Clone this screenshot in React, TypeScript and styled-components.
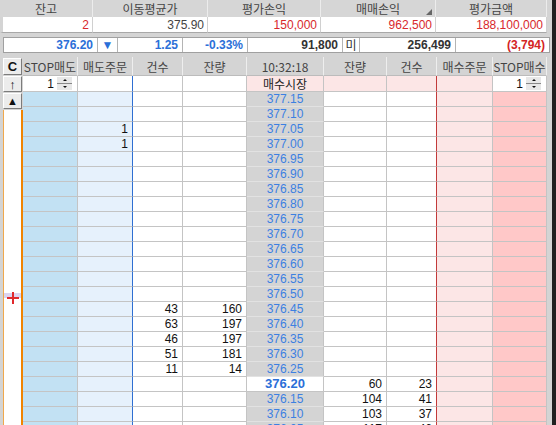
import styled, { createGlobalStyle } from 'styled-components';

const GlobalStyle = createGlobalStyle`
  html, body { margin: 0; padding: 0; }
  body {
    font-family: 'Liberation Sans', 'Noto Sans CJK KR', sans-serif;
    font-size: 12px;
    background: #d4d4d4;
  }
`;

const KR = `'Noto Sans CJK KR', 'Liberation Sans', sans-serif`;

const summaryCols = [
  { title: '잔고', value: '2', color: '#d8282c' },
  { title: '이동평균가', value: '375.90', color: '#444' },
  { title: '평가손익', value: '150,000', color: '#d8282c' },
  { title: '매매손익', value: '962,500', color: '#d8282c', sort: true },
  { title: '평가금액', value: '188,100,000', color: '#d8282c' },
];

const bookHeaders = ['STOP매도', '매도주문', '건수', '잔량', '10:32:18', '잔량', '건수', '매수주문', 'STOP매수'];

const askQty: Record<string, [string, string]> = {
  '376.45': ['43', '160'],
  '376.40': ['63', '197'],
  '376.35': ['46', '197'],
  '376.30': ['51', '181'],
  '376.25': ['11', '14'],
};
const bidQty: Record<string, [string, string]> = {
  '376.20': ['60', '23'],
  '376.15': ['104', '41'],
  '376.10': ['103', '37'],
  '376.05': ['117', '46'],
};
const sellOrders: Record<string, string> = { '377.05': '1', '377.00': '1' };

const prices = Array.from({ length: 23 }, (_, i) => ((37715 - i * 5) / 100).toFixed(2));
const CURRENT = '376.20';

const Page = styled.div`
  width: 556px;
  height: 425px;
  overflow: hidden;
  display: flex;
  background: #d4d4d4;
`;

const Content = styled.div`
  width: 552px;
  display: flex;
  flex-direction: column;
`;

const Edge = styled.div`
  width: 4px;
  background: #202020;
`;

const Summary = styled.div`
  display: grid;
  grid-template-columns: 93px 115px 113px 115px 111px;
  width: 547px;
`;

const SumHead = styled.div`
  position: relative;
  height: 17px;
  background: #d6d6d6;
  border-right: 1px solid #ececec;
  box-sizing: border-box;
  display: flex;
  align-items: center;
  justify-content: center;
  font-family: ${KR};
  font-size: 12px;
  color: #444;
`;

const SortMark = styled.span`
  position: absolute;
  right: 3px;
  bottom: 2px;
  width: 0;
  height: 0;
  border-left: 6px solid transparent;
  border-bottom: 6px solid #666;
`;

const SumValue = styled.div<{ $color: string; $first?: boolean }>`
  height: 16px;
  background: #fff;
  box-sizing: border-box;
  border-right: 1px solid #d0d0d0;
  border-bottom: 1px solid #a8a8a8;
  border-left: ${(p) => (p.$first ? '3px solid #d4d4d4' : 'none')};
  display: flex;
  align-items: center;
  justify-content: flex-end;
  padding-right: 3px;
  color: ${(p) => p.$color};
  font-size: 12px;
`;

const Ticker = styled.div`
  margin: 4px 0 4px 3px;
  width: 547px;
  height: 16px;
  box-sizing: border-box;
  border: 1px solid #a0a0a0;
  background: #fff;
  display: grid;
  grid-template-columns: 94px 20px 65px 65px 95px 17px 96px 93px;
`;

const TickCell = styled.div<{ $color?: string; $center?: boolean; $last?: boolean }>`
  border-right: ${(p) => (p.$last ? 'none' : '1px solid #b4b4b4')};
  display: flex;
  align-items: center;
  justify-content: ${(p) => (p.$center ? 'center' : 'flex-end')};
  padding-right: ${(p) => (p.$center ? '0' : '4px')};
  color: ${(p) => p.$color || '#333'};
  font-weight: bold;
  font-size: 12px;
  line-height: 14px;
`;

const KrText = styled.span`
  font-family: ${KR};
  font-weight: normal;
`;

const Book = styled.div`
  display: flex;
  flex: 1;
  min-height: 0;
`;

const Strip = styled.div`
  width: 23px;
  display: flex;
  flex-direction: column;
  gap: 1px;
  padding-top: 1px;
`;

const SideButton = styled.div<{ $h: number }>`
  margin-left: 3px;
  width: 19px;
  height: ${(p) => p.$h}px;
  box-sizing: border-box;
  background: #ececec;
  border: 1px solid;
  border-color: #ffffff #7c7c7c #7c7c7c #ffffff;
  display: flex;
  align-items: center;
  justify-content: center;
  font-weight: bold;
  font-size: 13px;
  color: #111;
`;

const OrangeBox = styled.div`
  position: relative;
  flex: 1;
  margin-left: 3px;
  background: #fff;
  border-left: 1px solid #f0a84c;
  border-right: 2px solid #f08400;
`;

const Marker = styled.div`
  position: absolute;
  left: 0;
  right: 0;
  top: 183px;
  height: 5px;
  background: #dcd4f0;
`;

const Plus = styled.svg`
  position: absolute;
  left: 3px;
  top: 182px;
`;

const Grid = styled.div`
  display: grid;
  grid-template-columns: 55px 55px 50px 64px 77px 63px 50px 56px 54px;
  grid-auto-rows: 15px;
  grid-template-rows: 19px 16px;
  width: 524px;
`;

const HeadCell = styled.div`
  background: #d4d4d4;
  border-right: 1px solid #eeeeee;
  border-bottom: 1px solid #bcbcbc;
  box-sizing: border-box;
  display: flex;
  align-items: center;
  justify-content: center;
  font-family: ${KR};
  font-size: 12px;
  color: #444;
  white-space: nowrap;
  overflow: hidden;
`;

const Cell = styled.div<{
  $bg: string;
  $align?: 'left' | 'right' | 'center';
  $color?: string;
  $bold?: boolean;
  $line?: string;
  $rowLine?: string;
}>`
  background: ${(p) => p.$bg};
  box-sizing: border-box;
  border-right: 1px solid ${(p) => p.$line || '#c4c4c4'};
  border-bottom: 1px solid ${(p) => p.$rowLine || '#c4c4c4'};
  display: flex;
  align-items: center;
  justify-content: ${(p) =>
    p.$align === 'center' ? 'center' : p.$align === 'left' ? 'flex-start' : 'flex-end'};
  padding-right: ${(p) => (p.$align === 'center' ? '0' : '4px')};
  color: ${(p) => p.$color || '#111'};
  font-weight: ${(p) => (p.$bold ? 'bold' : 'normal')};
  font-size: ${(p) => (p.$bold ? '13px' : '12px')};
  line-height: 14px;
  overflow: hidden;
`;

const MarketLabel = styled.span`
  font-family: ${KR};
  font-size: 12px;
  color: #222;
`;

const SpinWrap = styled.div`
  display: flex;
  align-items: center;
  gap: 3px;
  padding-right: 1px;
`;

const Spinner = styled.div`
  width: 15px;
  height: 13px;
  display: flex;
  flex-direction: column;
  gap: 1px;
  background: #888;
  padding: 0;
`;

const SpinBtn = styled.div<{ $up?: boolean }>`
  flex: 1;
  background: #e8e8e8;
  display: flex;
  align-items: center;
  justify-content: center;

  &::after {
    content: '';
    width: 0;
    height: 0;
    border-left: 2px solid transparent;
    border-right: 2px solid transparent;
    ${(p) => (p.$up ? 'border-bottom: 2px solid #111;' : 'border-top: 2px solid #111;')}
  }
`;

const SpinInput = () => (
  <SpinWrap>
    <span>1</span>
    <Spinner>
      <SpinBtn $up />
      <SpinBtn />
    </Spinner>
  </SpinWrap>
);

const BLUE_LINE = '#2f6fd2';
const RED_LINE = '#c23a3a';

export default function App() {
  return (
    <>
      <GlobalStyle />
      <Page>
        <Content>
          <Summary>
            {summaryCols.map((c) => (
              <SumHead key={c.title}>
                {c.title}
                {c.sort && <SortMark />}
              </SumHead>
            ))}
            {summaryCols.map((c, i) => (
              <SumValue key={c.title} $color={c.color} $first={i === 0}>
                {c.value}
              </SumValue>
            ))}
          </Summary>

          <Ticker>
            <TickCell $color="#2b6fd8">376.20</TickCell>
            <TickCell $color="#2b6fd8" $center>
              ▼
            </TickCell>
            <TickCell $color="#2b6fd8">1.25</TickCell>
            <TickCell $color="#2b6fd8">-0.33%</TickCell>
            <TickCell>91,800</TickCell>
            <TickCell $center>
              <KrText>미</KrText>
            </TickCell>
            <TickCell>256,499</TickCell>
            <TickCell $color="#d42424" $last>
              (3,794)
            </TickCell>
          </Ticker>

          <Book>
            <Strip>
              <SideButton $h={17}>C</SideButton>
              <SideButton $h={16}>↑</SideButton>
              <SideButton $h={16} style={{ fontSize: 11 }}>
                ▲
              </SideButton>
              <OrangeBox>
                <Marker />
                <Plus width="12" height="12" viewBox="0 0 12 12">
                  <path d="M6 0v12M0 6h12" stroke="#e0282c" strokeWidth="2" />
                </Plus>
              </OrangeBox>
            </Strip>

            <Grid>
              {bookHeaders.map((h, i) => (
                <HeadCell key={i}>{h}</HeadCell>
              ))}

              <Cell $bg="#fff">
                <SpinInput />
              </Cell>
              <Cell $bg="#fff" $line={BLUE_LINE} />
              <Cell $bg="#fff" />
              <Cell $bg="#fff" />
              <Cell $bg="#fce6e6" $align="center">
                <MarketLabel>매수시장</MarketLabel>
              </Cell>
              <Cell $bg="#fce6e6" />
              <Cell $bg="#fce6e6" $line={RED_LINE} />
              <Cell $bg="#fce6e6" />
              <Cell $bg="#fff">
                <SpinInput />
              </Cell>

              {prices.map((p) => {
                const ask = askQty[p];
                const bid = bidQty[p];
                const cur = p === CURRENT;
                return [
                  <Cell key={p + 'a'} $bg="#c2e1f3" />,
                  <Cell key={p + 'b'} $bg="#e6f1fc" $line={BLUE_LINE}>
                    {sellOrders[p]}
                  </Cell>,
                  <Cell key={p + 'c'} $bg="#fff">
                    {ask?.[0]}
                  </Cell>,
                  <Cell key={p + 'd'} $bg="#fff">
                    {ask?.[1]}
                  </Cell>,
                  <Cell
                    key={p + 'e'}
                    $bg={cur ? '#fff' : '#d4d4d4'}
                    $align="center"
                    $color={cur ? '#2b6fd8' : '#3c80e2'}
                    $bold={cur}
                    $rowLine={cur ? '#c4c4c4' : '#e2e2e2'}
                  >
                    {p}
                  </Cell>,
                  <Cell key={p + 'f'} $bg="#fff">
                    {bid?.[0]}
                  </Cell>,
                  <Cell key={p + 'g'} $bg="#fff" $line={RED_LINE}>
                    {bid?.[1]}
                  </Cell>,
                  <Cell key={p + 'h'} $bg="#fce6e6" />,
                  <Cell key={p + 'i'} $bg="#ffc8c8" />,
                ];
              })}
            </Grid>
          </Book>
        </Content>
        <Edge />
      </Page>
    </>
  );
}
